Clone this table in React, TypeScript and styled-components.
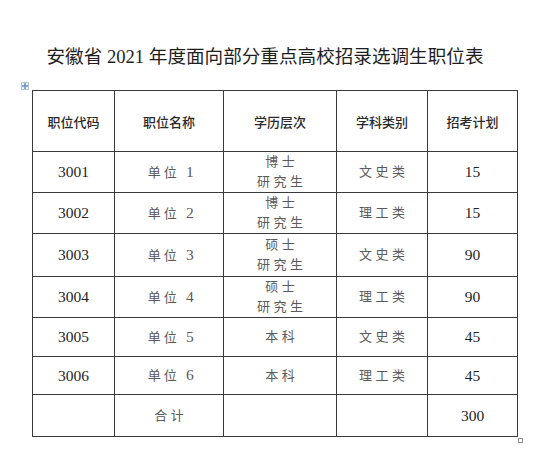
import styled, { createGlobalStyle } from 'styled-components'

const GlobalStyle = createGlobalStyle`
  html, body {
    margin: 0;
    padding: 0;
    background: #ffffff;
  }
  body {
    font-family: "Liberation Serif", "Noto Sans CJK SC", serif;
  }
`

const Page = styled.div`
  width: 550px;
  height: 463px;
  padding-top: 45px;
  box-sizing: border-box;
  display: flex;
  flex-direction: column;
  align-items: center;
`

const Title = styled.h1`
  margin: 0;
  font-family: "Liberation Serif", "Noto Sans CJK SC", sans-serif;
  font-weight: 400;
  font-size: 18.6px;
  line-height: 24px;
  color: #1e1e1e;
  white-space: nowrap;
  transform: translateX(-10px);
`

const TableWrap = styled.div`
  position: relative;
  margin-top: 21px;
`

const MoveHandle = styled.div`
  position: absolute;
  left: -11px;
  top: -8px;
  width: 8px;
  height: 8px;
  border: 1px solid #b9c4d4;
  background: #eef2f8;
  box-sizing: border-box;
  display: flex;
  align-items: center;
  justify-content: center;
`

const ResizeHandle = styled.div`
  position: absolute;
  right: -5px;
  bottom: -6px;
  width: 5px;
  height: 5px;
  border: 1px solid #8a8a8a;
  background: #ffffff;
  box-sizing: border-box;
`

const Table = styled.table`
  border-collapse: collapse;
  table-layout: fixed;
  width: 485px;
`

const Row = styled.tr<{ $h: number }>`
  height: ${(p) => p.$h}px;
`

const HeadCell = styled.th`
  border: 1px solid #3a3a3a;
  padding: 0;
  text-align: center;
  vertical-align: middle;
  font-family: "Noto Sans CJK SC", sans-serif;
  font-weight: 500;
  font-size: 13px;
  color: #2a2a2a;
`

const Cell = styled.td<{ $kind: 'num' | 'text' }>`
  border: 1px solid #3a3a3a;
  padding: 0;
  text-align: center;
  vertical-align: middle;
  font-family: "Liberation Serif", "Noto Sans CJK SC", serif;
  font-size: ${(p) => (p.$kind === 'num' ? '15.5px' : '13px')};
  letter-spacing: ${(p) => (p.$kind === 'num' ? '0' : '3.5px')};
  color: ${(p) => (p.$kind === 'num' ? '#1f1f1f' : '#5a5a5a')};
  line-height: 20px;
`

const Line = styled.div`
  padding-left: 3.5px;
`

const UnitName = styled.span`
  font-size: 13px;
  letter-spacing: 3px;
  & b {
    font-weight: 400;
    font-size: 15.5px;
    letter-spacing: 0;
  }
`

type Item = {
  code: string
  unit: string
  degree: string[]
  subject: string
  plan: string
  h: number
}

const items: Item[] = [
  { code: '3001', unit: '1', degree: ['博士', '研究生'], subject: '文史类', plan: '15', h: 41 },
  { code: '3002', unit: '2', degree: ['博士', '研究生'], subject: '理工类', plan: '15', h: 41 },
  { code: '3003', unit: '3', degree: ['硕士', '研究生'], subject: '文史类', plan: '90', h: 43 },
  { code: '3004', unit: '4', degree: ['硕士', '研究生'], subject: '理工类', plan: '90', h: 41 },
  { code: '3005', unit: '5', degree: ['本科'], subject: '文史类', plan: '45', h: 39 },
  { code: '3006', unit: '6', degree: ['本科'], subject: '理工类', plan: '45', h: 38 },
]

const widths = [82, 109, 113, 91, 90]
const heads = ['职位代码', '职位名称', '学历层次', '学科类别', '招考计划']

const App = (): JSX.Element => (
  <>
    <GlobalStyle />
    <Page>
      <Title>安徽省 2021 年度面向部分重点高校招录选调生职位表</Title>
      <TableWrap>
        <MoveHandle>
          <svg width="6" height="6" viewBox="0 0 6 6">
            <path d="M3 0.3 V5.7 M0.3 3 H5.7" stroke="#3b6fc4" strokeWidth="0.9" />
            <path d="M3 0 L2 1.2 H4 Z M3 6 L2 4.8 H4 Z M0 3 L1.2 2 V4 Z M6 3 L4.8 2 V4 Z" fill="#3b6fc4" />
          </svg>
        </MoveHandle>
        <Table>
          <colgroup>
            {widths.map((w, i) => (
              <col key={i} style={{ width: w }} />
            ))}
          </colgroup>
          <tbody>
            <Row $h={61}>
              {heads.map((h) => (
                <HeadCell key={h}>{h}</HeadCell>
              ))}
            </Row>
            {items.map((it) => (
              <Row $h={it.h} key={it.code}>
                <Cell $kind="num">{it.code}</Cell>
                <Cell $kind="text">
                  <Line>
                    <UnitName>
                      单位 <b>{it.unit}</b>
                    </UnitName>
                  </Line>
                </Cell>
                <Cell $kind="text">
                  {it.degree.map((d) => (
                    <Line key={d}>{d}</Line>
                  ))}
                </Cell>
                <Cell $kind="text">
                  <Line>{it.subject}</Line>
                </Cell>
                <Cell $kind="num">{it.plan}</Cell>
              </Row>
            ))}
            <Row $h={42}>
              <Cell $kind="num" />
              <Cell $kind="text">
                <Line>合计</Line>
              </Cell>
              <Cell $kind="text" />
              <Cell $kind="text" />
              <Cell $kind="num">300</Cell>
            </Row>
          </tbody>
        </Table>
        <ResizeHandle />
      </TableWrap>
    </Page>
  </>
)

export default App
